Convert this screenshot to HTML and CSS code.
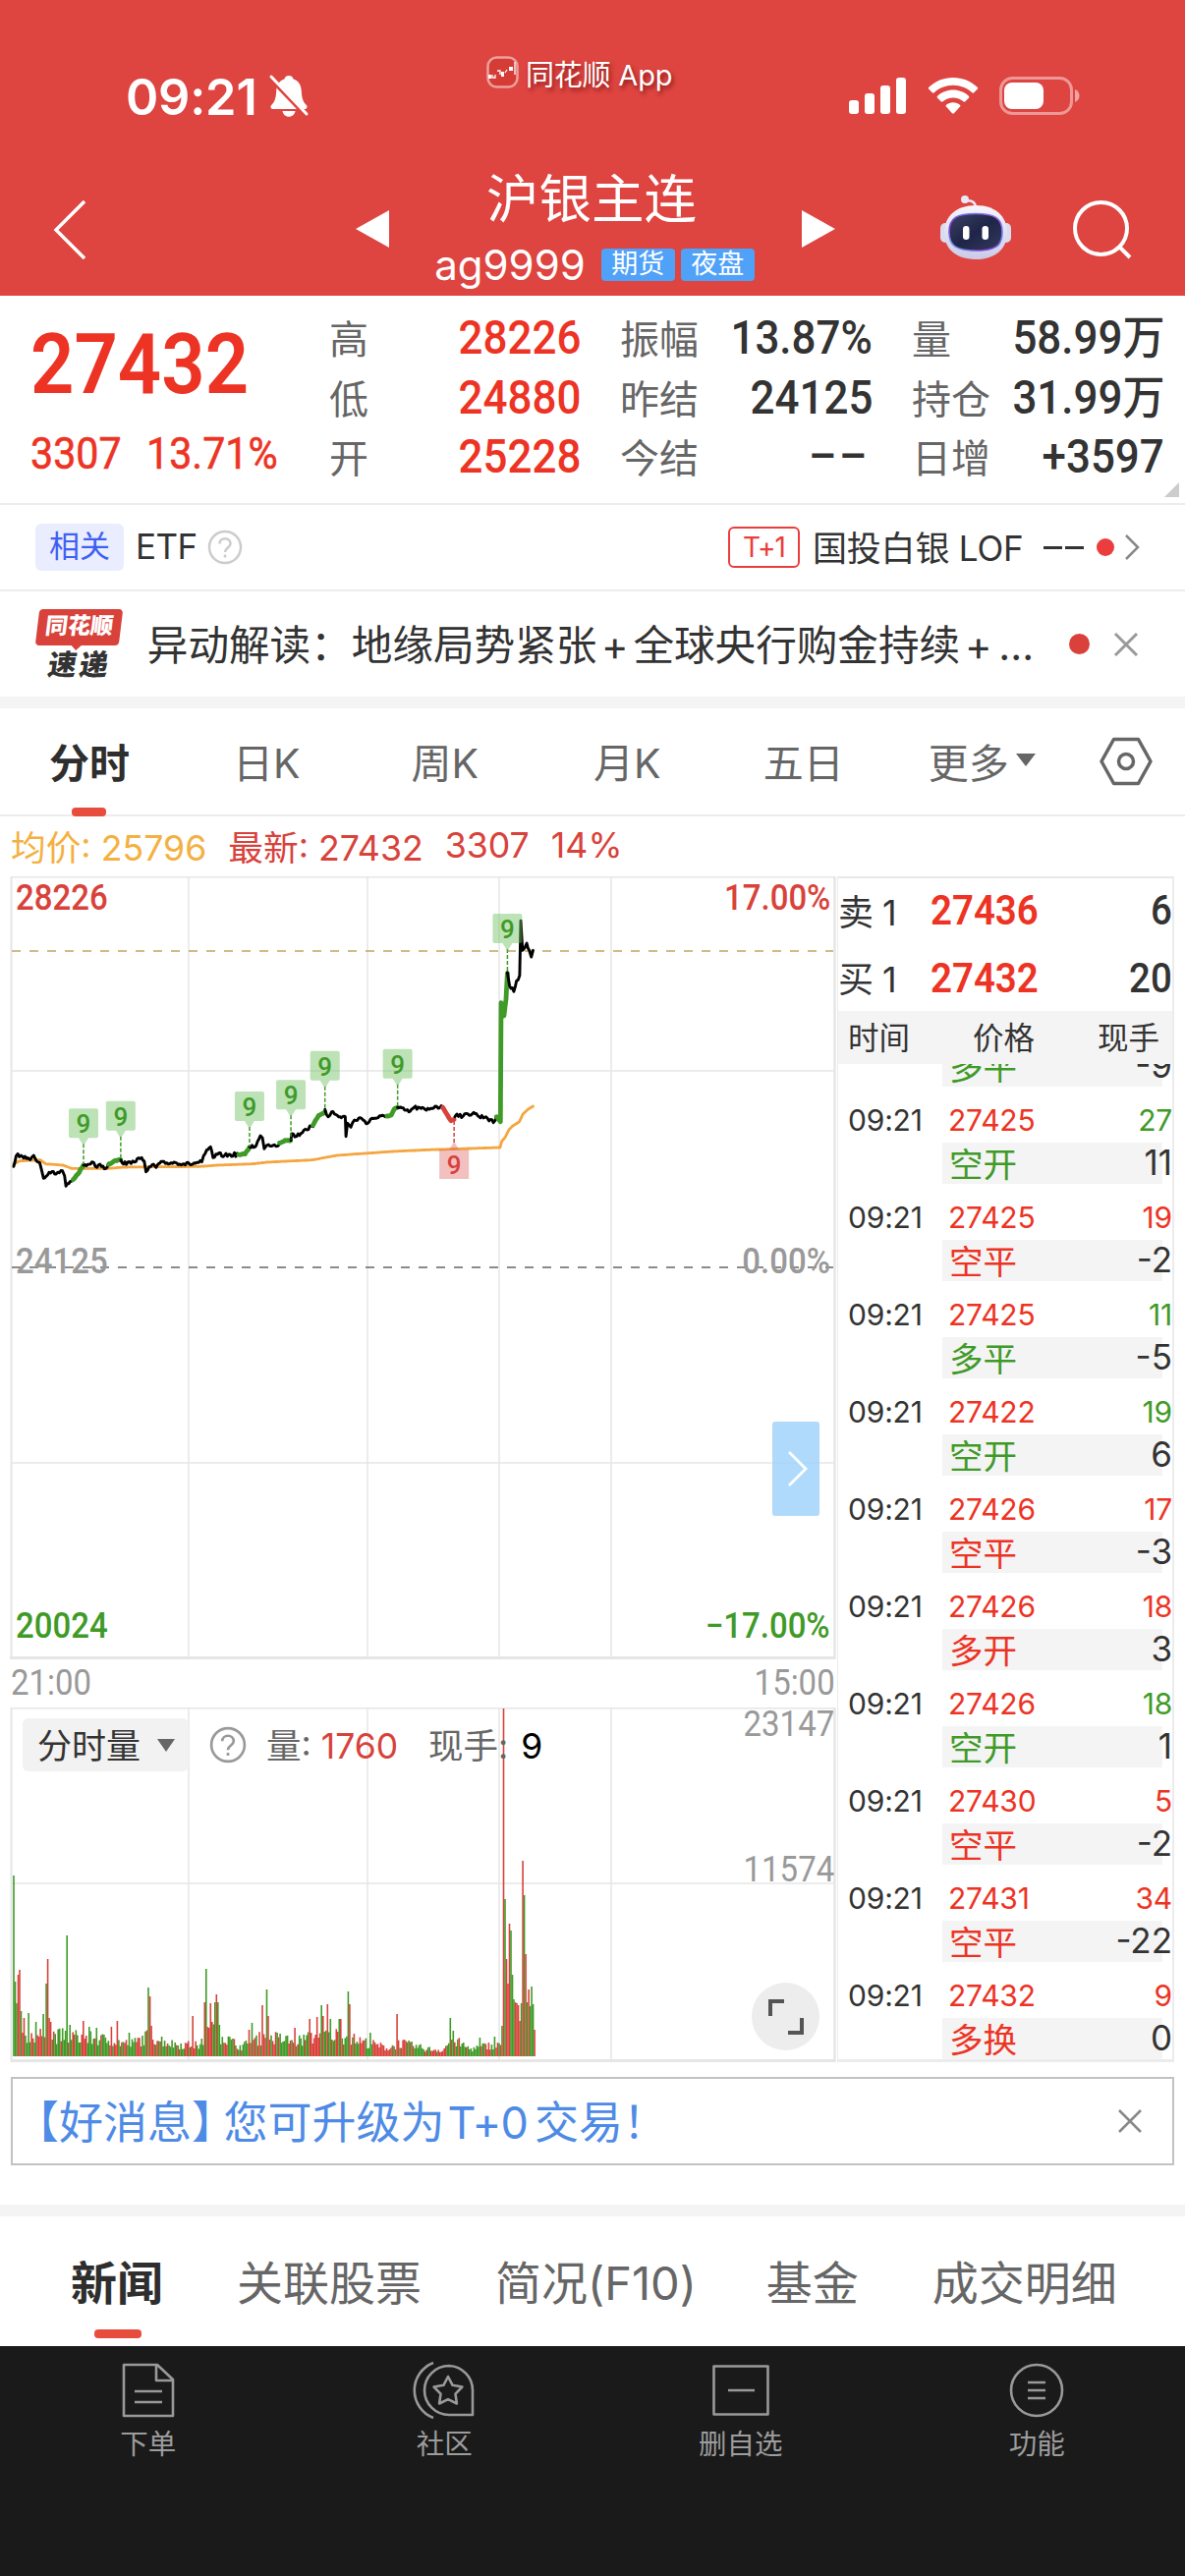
FILE: index.html
```html
<!DOCTYPE html>
<html lang="zh">
<head>
    <meta charset="UTF-8">
    <meta name="viewport" content="width=device-width, initial-scale=1.0">
    <title>沪银主连 ag9999</title>
    <link rel="stylesheet" href="styles.css">
</head>
<body>
    <!-- 顶部 -->
    <header class="header">
        <div class="status-bar">
            <div class="status-time">
                <span>09:21</span>
                <svg width="42" height="46" viewBox="0 0 42 46">
                    <path d="M21 2c2.600 0 4.200 1.600 4.600 3.600 5.400 1.700 7.900 6.200 8.200 12 .4 8 1.800 11.400 5 14.400 1.500 1.500.6 4-1.600 4H4.800c-2.200 0-3.100-2.500-1.600-4 3.200-3 4.600-6.400 5-14.400.3-5.800 2.800-10.300 8.200-12C16.800 3.600 18.400 2 21 2zM14.500 38h13c-.5 3.400-3 5.800-6.500 5.800s-6-2.400-6.500-5.800z" fill="#fff"/>
                    <path d="M-1 1l42 44" stroke="#de4440" stroke-width="5"/>
                    <path d="M3 3l36 38" stroke="#fff" stroke-width="3" stroke-linecap="round"/>
                </svg>
            </div>
            <div class="status-app">
                <svg width="34" height="34" viewBox="0 0 34 34">
                    <rect x="1.500" y="1.500" width="30" height="30" rx="9" fill="#d63c36" stroke="#eba09d" stroke-width="2.500"/>
                    <path d="M2 19h3v4H2zM15 16h3v5h-3zM23 11h4v4h-4z" fill="#fff"/>
                    <path d="M6 19v3h3v-3M11 15h3v4M19 17l2-3M29 6v13" fill="none" stroke="#fff" stroke-width="1.300"/>
                </svg>
                <span>同花顺 App</span>
            </div>
            <div class="status-icons">
                <svg width="60" height="38" viewBox="0 0 60 38" fill="#fff">
                    <rect x="0" y="23" width="10" height="14" rx="3"/>
                    <rect x="16" y="16" width="10" height="21" rx="3"/>
                    <rect x="32" y="8" width="10" height="29" rx="3"/>
                    <rect x="48" y="0" width="10" height="37" rx="3"/>
                </svg>
                <svg class="wifi" width="52" height="38" viewBox="0 0 52 38" fill="#fff">
                    <path d="M26 0c9.600 0 18.300 3.700 24.700 9.800.6.600.6 1.500 0 2l-3.500 3.500c-.5.500-1.400.5-2 0C40.200 10.600 33.400 7.800 26 7.800S11.800 10.600 6.800 15.300c-.6.500-1.500.5-2 0L1.300 11.800c-.6-.5-.6-1.400 0-2C7.700 3.700 16.400 0 26 0z"/>
                    <path d="M26 12.600c6.100 0 11.700 2.300 15.900 6.100.6.600.6 1.500 0 2.100l-3.500 3.400c-.6.600-1.400.6-2 .1-2.800-2.400-6.400-3.800-10.400-3.800s-7.600 1.400-10.400 3.800c-.6.500-1.400.5-2-.1l-3.500-3.400c-.6-.6-.6-1.500 0-2.100 4.200-3.800 9.800-6.100 15.900-6.100z"/>
                    <path d="M26 25.200c2.700 0 5.100.9 7 2.500.6.500.6 1.400.1 1.900l-6.100 6.600c-.5.600-1.500.6-2 0l-6.100-6.600c-.5-.5-.5-1.400.1-1.900 1.900-1.600 4.300-2.500 7-2.500z"/>
                </svg>
                <svg width="83" height="39" viewBox="0 0 83 39">
                    <rect x="1.500" y="1.500" width="72" height="36" rx="12" fill="none" stroke="#fff" stroke-opacity=".45" stroke-width="3"/>
                    <rect x="5" y="6" width="40" height="27" rx="8" fill="#fff"/>
                    <path d="M77 13c3.500 1.500 4.500 4 4.500 6.500S80.500 24.500 77 26z" fill="#fff" fill-opacity=".5"/>
                </svg>
            </div>
        </div>
        <div class="nav-bar">
            <svg class="back" width="34" height="62" viewBox="0 0 34 62"><path d="M32 2L3 31l29 29" fill="none" stroke="#fff" stroke-width="3.500"/></svg>
            <svg class="prev" width="34" height="38" viewBox="0 0 34 38"><path d="M34 0v38L0 19z" fill="#fff"/></svg>
            <div class="title">
                <h1>沪银主连</h1>
                <div class="code"><span>ag9999</span><i>期货</i><i>夜盘</i></div>
            </div>
            <svg class="next" width="34" height="38" viewBox="0 0 34 38"><path d="M0 0v38l34-19z" fill="#fff"/></svg>
            <svg class="robot" width="74" height="68" viewBox="0 0 74 68">
                <defs>
                    <linearGradient id="shell" x1="0" y1="0" x2="0" y2="1"><stop offset="0" stop-color="#f7f6fd"/><stop offset="1" stop-color="#c9cbe6"/></linearGradient>
                    <linearGradient id="face" x1="0" y1="0" x2="1" y2="1"><stop offset="0" stop-color="#3d4263"/><stop offset=".5" stop-color="#1f2548"/><stop offset="1" stop-color="#343a5c"/></linearGradient>
                    <linearGradient id="rim" x1="0" y1="1" x2="1" y2="0"><stop offset="0" stop-color="#5fc3e8"/><stop offset=".3" stop-color="#8a3be0"/><stop offset=".7" stop-color="#6f7cf0"/><stop offset="1" stop-color="#b35cf0"/></linearGradient>
                </defs>
                <path d="M27 6.500c5-1 10 1 10 7" fill="none" stroke="#e9e9f6" stroke-width="2.500"/>
                <circle cx="26" cy="5" r="4" fill="#e9e9f6"/>
                <rect x="1" y="29" width="10" height="20" rx="5" fill="#d9dbef"/>
                <rect x="63" y="29" width="10" height="20" rx="5" fill="#d9dbef"/>
                <path d="M37 11c20 0 32 11 32 28S56 66 37 66 5 56 5 39s12-28 32-28z" fill="url(#shell)"/>
                <path d="M37 19.500c19 0 27 4 27 18.500S57 57 37 57 10 52.500 10 38s8-18.500 27-18.500z" fill="url(#face)" stroke="url(#rim)" stroke-width="1.600"/>
                <rect x="24" y="32" width="6.500" height="14" rx="3.200" fill="#fff"/>
                <rect x="43.500" y="32" width="6.500" height="14" rx="3.200" fill="#fff"/>
            </svg>
            <svg class="search" width="62" height="62" viewBox="0 0 62 62"><circle cx="29.500" cy="29.500" r="26.500" fill="none" stroke="#fff" stroke-width="4"/><path d="M48 48l11 11" stroke="#fff" stroke-width="4"/></svg>
        </div>
    </header>

    <!-- 行情数据 -->
    <section class="quote">
        <div class="quote-main">
            <div class="price"><b class="din left">27432</b></div>
            <div class="change"><b class="din left">3307</b><b class="din left">13.71%</b></div>
        </div>
        <div class="quote-grid">
            <div><label>高</label><b class="din red">28226</b></div>
            <div><label>振幅</label><b class="din">13.87%</b></div>
            <div><label>量</label><b class="din">58.99<em>万</em></b></div>
            <div><label>低</label><b class="din red">24880</b></div>
            <div><label>昨结</label><b class="din">24125</b></div>
            <div><label>持仓</label><b class="din">31.99<em>万</em></b></div>
            <div><label>开</label><b class="din red">25228</b></div>
            <div><label>今结</label><b class="din dash">––</b></div>
            <div><label>日增</label><b class="din">+3597</b></div>
        </div>
        <svg class="corner" width="15" height="15" viewBox="0 0 15 15"><path d="M15 0v15H0z" fill="#ccc"/></svg>
    </section>

    <section class="related">
        <span class="tag-blue">相关</span>
        <span class="etf">ETF</span>
        <svg class="help" width="36" height="36" viewBox="0 0 36 36"><circle cx="18" cy="18" r="16" fill="none" stroke="#ccc" stroke-width="2.500"/><path d="M12.500 14.500c0-7 11-7 11 0 0 4-5.500 4-5.500 8.500M18 25.500v3" fill="none" stroke="#ccc" stroke-width="2.500"/></svg>
        <div class="related-right">
            <span class="tag-red">T+1</span>
            <span class="fund">国投白银 LOF</span>
            <span class="fund-value"></span>
            <i class="dot small"></i>
            <svg width="17" height="28" viewBox="0 0 17 28"><path d="M2 2l12 12L2 26" fill="none" stroke="#888" stroke-width="2.500"/></svg>
        </div>
    </section>

    <section class="news-line">
        <div class="news-logo"><span>同花顺</span><b>速递</b></div>
        <p>异动解读：地缘局势紧张<s>+</s>全球央行购金持续<s>+</s><u>…</u></p>
        <i class="dot"></i>
        <svg width="26" height="26" viewBox="0 0 26 26"><path d="M2 2l22 22M24 2L2 24" stroke="#999" stroke-width="3"/></svg>
    </section>

    <div class="band"></div>

    <!-- 周期切换 -->
    <nav class="period">
        <a class="active">分时</a>
        <a>日K</a>
        <a>周K</a>
        <a>月K</a>
        <a>五日</a>
        <a>更多<i class="caret"></i></a>
        <svg width="54" height="50" viewBox="0 0 54 50"><path d="M14.500 2.500h25L52 25 39.500 47.500h-25L2 25z" fill="none" stroke="#666" stroke-width="3.500" stroke-linejoin="round"/><circle cx="27" cy="25" r="7.500" fill="none" stroke="#666" stroke-width="3.500"/></svg>
    </nav>

    <div class="summary">
        <span class="avg">均价: 25796</span>
        <span>最新: 27432</span>
        <span>3307</span>
        <span>14%</span>
    </div>

    <main class="board">
        <div class="charts">
            <div class="chart">
                <svg id="priceChart" width="852" height="797" viewBox="0 0 852 797"></svg>
                <b class="din left lt red2">28226</b>
                <b class="din rt red2">17.00%</b>
                <b class="din left lm">24125</b>
                <b class="din rm">0.00%</b>
                <b class="din left lb green">20024</b>
                <b class="din rb green">−17.00%</b>
                <div class="expand-side"><svg width="22" height="38" viewBox="0 0 22 38"><path d="M2 2l17 17L2 36" fill="none" stroke="#fff" stroke-width="2.800"/></svg></div>
            </div>
            <div class="time-axis"><b class="din left">21:00</b><b class="din">15:00</b></div>
            <div class="chart volume">
                <svg id="volumeChart" width="852" height="361" viewBox="0 0 852 361"></svg>
                <div class="volume-bar">
                    <span class="select">分时量<i class="caret"></i></span>
                    <svg width="38" height="38" viewBox="0 0 36 36"><circle cx="18" cy="18" r="16" fill="none" stroke="#999" stroke-width="2.500"/><path d="M12.500 14.500c0-7 11-7 11 0 0 4-5.500 4-5.500 8.500M18 25.500v3" fill="none" stroke="#999" stroke-width="2.500"/></svg>
                    <span class="vol">量: <em>1760</em></span>
                    <span class="hand">现手: <em>9</em></span>
                </div>
                <b class="din vt">23147</b>
                <b class="din vm">11574</b>
                <div class="fullscreen"><svg width="38" height="38" viewBox="0 0 38 38"><path d="M3 18V3h14M35 20v15H21" fill="none" stroke="#555" stroke-width="4"/></svg></div>
            </div>
        </div>

        <aside class="orders">
            <div class="level"><span>卖 1</span><b class="din left">27436</b><b class="din count">6</b></div>
            <div class="level"><span>买 1</span><b class="din left">27432</b><b class="din count">20</b></div>
            <div class="orders-head"><span>时间</span><span>价格</span><span>现手</span></div>
            <div class="ticks" id="ticks"></div>
        </aside>
    </main>

    <div class="notice">
        <p>【好消息<s>】</s>您可升级为<u>T+0</u>交易！</p>
        <svg width="26" height="26" viewBox="0 0 26 26"><path d="M2 2l22 22M24 2L2 24" stroke="#888" stroke-width="2.500"/></svg>
    </div>

    <div class="band"></div>

    <nav class="info-tabs">
        <a class="active">新闻</a>
        <a>关联股票</a>
        <a>简况(F10)</a>
        <a>基金</a>
        <a>成交明细</a>
    </nav>

    <!-- 底部工具栏 -->
    <footer class="toolbar">
        <div>
            <svg width="60" height="60" viewBox="0 0 60 60"><path d="M5 4h34l16 15v37H5zM38 4v16h16M16 31h28M16 42h28"/></svg>
            <span>下单</span>
        </div>
        <div>
            <svg width="64" height="60" viewBox="0 0 64 60"><path d="M21 2a30 30 0 0 0 0 56M37 5a25 25 0 1 0 0 50h24V30A25 25 0 0 0 37 5z"/><path d="M36 16l4.600 8.800 9.800 1.700-6.900 7.100 1.400 9.900-8.900-4.400-8.900 4.400 1.400-9.900-6.900-7.100 9.800-1.700z"/></svg>
            <span>社区</span>
        </div>
        <div>
            <svg width="60" height="60" viewBox="0 0 60 60"><path d="M2.500 5.500h55v49h-55zM17 30h27"/></svg>
            <span>删自选</span>
        </div>
        <div>
            <svg width="60" height="60" viewBox="0 0 60 60"><circle cx="30" cy="30" r="26"/><path d="M21 22h18M21 30h18M21 38h18"/></svg>
            <span>功能</span>
        </div>
    </footer>

    <script src="script.js"></script>
</body>
</html>
```
FILE: styles.css
```css
* {
    margin: 0;
    padding: 0;
    box-sizing: border-box;
}

body {
    width: 1206px;
    height: 2622px;
    overflow: hidden;
    background: #fff;
    color: #333;
    font-family: Inter, "Noto Sans CJK SC", sans-serif;
}

svg {
    display: block;
    flex: none;
}

i, em {
    font-style: normal;
}

s, u {
    text-decoration: none;
}

/* 窄体数字 */
.din {
    display: inline-block;
    font-family: Roboto, "Noto Sans CJK SC", sans-serif;
    font-weight: 500;
    transform: scaleX(0.915);
    transform-origin: right center;
    white-space: nowrap;
}

.din.left {
    transform-origin: left center;
}

.red {
    color: #ed3324;
}

.green {
    color: #3f9a27;
}

/* 顶部 */
.header {
    height: 301px;
    background: #de4440;
    color: #fff;
}

.status-bar {
    display: flex;
    justify-content: space-between;
    height: 160px;
    padding: 0 106px 0 128px;
}

.status-time {
    display: flex;
    align-items: center;
    height: 196px;
    width: 300px;
    font-size: 50.500px;
    font-weight: 600;
    letter-spacing: -0.2px;
}

.status-time svg {
    margin-left: 11px;
}

.status-app {
    display: flex;
    align-items: center;
    gap: 6px;
    width: 200px;
    height: 148px;
    margin-left: -38px;
    font-size: 29px;
    letter-spacing: -0.2px;
    white-space: nowrap;
    text-shadow: 2px 3px 4px rgba(80, 0, 0, 0.6);
}

.status-icons {
    display: flex;
    align-items: center;
    justify-content: flex-end;
    width: 300px;
    height: 195px;
}

.wifi {
    margin: 0 21px 0 20px;
}

.nav-bar {
    display: flex;
    align-items: center;
    height: 141px;
    padding-left: 54px;
}

.back {
    margin-top: 7px;
}

.prev {
    margin: 4px 0 0 274px;
}

.title {
    display: flex;
    flex-direction: column;
    align-items: center;
    width: 420px;
}

.title h1 {
    margin: 8px 0 0 -8px;
    font-size: 53.500px;
    font-weight: 400;
    line-height: 74px;
}

.code {
    display: flex;
    align-items: center;
    height: 59px;
    margin: 0 0 4px 4px;
    font-size: 42px;
}

.code span {
    margin-right: 16px;
}

.code i {
    width: 75px;
    height: 33px;
    margin-right: 6px;
    border-radius: 4px;
    background: #4fa2f8;
    font-size: 27px;
    line-height: 31px;
    text-align: center;
}

.next {
    margin-top: 4px;
}

.robot {
    margin: 3px 0 0 106px;
}

.search {
    margin: 6px 0 0 61px;
}

/* 行情 */
.quote {
    position: relative;
    display: flex;
    height: 213px;
    border-bottom: 2px solid #ececec;
}

.quote-main {
    width: 335px;
    padding: 12px 0 0 31px;
    color: #ed3324;
}

.price {
    height: 116px;
    font-size: 85px;
    line-height: 114px;
}

.price b {
    font-weight: 600;
}

.change {
    height: 62px;
    font-size: 45px;
    line-height: 63px;
}

.change b {
    font-weight: 400;
    -webkit-text-stroke: 0.6px #ed3324;
}

.change b:last-child {
    margin-left: 17px;
}

.quote-grid {
    display: grid;
    grid-template-columns: 256px 257px 257px;
    grid-auto-rows: 60.500px;
    column-gap: 40px;
    padding-top: 12px;
}

.quote-grid div {
    display: flex;
    justify-content: space-between;
    align-items: center;
    white-space: nowrap;
}

.quote-grid label {
    width: 84px;
    font-size: 40px;
    color: #666;
}

.quote-grid b {
    padding-top: 2px;
    font-size: 48px;
    line-height: 60px;
}

.quote-grid em {
    font-size: 47px;
    line-height: 1;
}

.quote-grid .dash {
    padding-right: 3px;
    letter-spacing: 3px;
}

.corner {
    position: absolute;
    right: 6px;
    bottom: 6px;
}

.related {
    display: flex;
    align-items: center;
    height: 88px;
    padding: 0 45px 0 36px;
    border-bottom: 2px solid #ececec;
    font-size: 35px;
}

.tag-blue {
    width: 90px;
    height: 48px;
    border-radius: 6px;
    background: #e9edfe;
    color: #3f5ff2;
    font-size: 31px;
    line-height: 45px;
    text-align: center;
}

.etf {
    margin: 0 10px 2px 12px;
    letter-spacing: -0.6px;
}

.related-right {
    display: flex;
    align-items: center;
    margin-left: auto;
}

.tag-red {
    width: 73px;
    height: 42px;
    border: 2px solid #eb3d3d;
    border-radius: 6px;
    color: #eb3d3d;
    font-size: 28px;
    line-height: 38px;
    text-align: center;
    letter-spacing: -1px;
}

.fund {
    width: 216px;
    margin: 0 0 3px 13px;
    letter-spacing: -0.2px;
    white-space: nowrap;
}

.fund-value {
    width: 41px;
    height: 3px;
    margin: 0 13px 0 19px;
    background: linear-gradient(90deg, #333 19px, #fff 19px, #fff 22px, #333 22px);
}

.dot {
    width: 21px;
    height: 21px;
    border-radius: 50%;
    background: #da413a;
}

.dot.small {
    width: 18px;
    height: 18px;
    margin-right: 10px;
    background: #eb3d3d;
}

.news-line {
    display: flex;
    align-items: center;
    height: 107px;
    padding: 0 47px 0 37px;
}

.news-logo {
    display: flex;
    flex-direction: column;
    align-items: center;
    width: 88px;
    margin-right: 25px;
}

.news-logo span {
    position: relative;
    width: 85px;
    height: 37px;
    border-radius: 4px;
    background: #d9423b;
    color: #fff;
    font-size: 23px;
    font-weight: 900;
    line-height: 35px;
    text-align: center;
    transform: skewX(-7deg);
}

.news-logo span::after {
    content: '';
    position: absolute;
    left: 36px;
    top: 36px;
    border: 6px solid transparent;
    border-top-color: #d9423b;
}

.news-logo b {
    margin-top: 5px;
    font-size: 29px;
    font-weight: 900;
    line-height: 30px;
    letter-spacing: 3px;
    transform: skewX(-9deg);
}

.news-line p {
    width: 940px;
    padding-bottom: 4px;
    font-size: 41.600px;
    white-space: nowrap;
}

.news-line p s {
    display: inline-block;
    width: 37px;
    text-align: center;
}

.news-line p u {
    letter-spacing: 1px;
    margin-left: 2px;
}

.news-line > svg {
    margin-left: 24px;
}

.band {
    height: 12px;
    background: #f4f4f4;
}

/* 周期 */
.period {
    display: flex;
    align-items: center;
    height: 110px;
    padding: 0 33px 0 50px;
    border-bottom: 2px solid #ececec;
    font-size: 41px;
    color: #666;
}

.period a {
    position: relative;
    margin: 0 105px 3px 0;
    white-space: nowrap;
}

.period a:nth-of-type(2) {
    margin-right: 113px;
}

.period a:nth-of-type(3) {
    margin-right: 117px;
}

.period a:nth-of-type(4) {
    margin-right: 104px;
}

.period a:nth-of-type(5) {
    margin-right: 86px;
}

.period a:nth-of-type(6) {
    display: flex;
    align-items: center;
    margin-right: 0;
}

.period svg {
    margin-left: auto;
}

.period .active, .info-tabs .active {
    color: #2e2e2e;
    font-weight: 700;
}

.period .active::after {
    content: '';
    position: absolute;
    left: 23px;
    bottom: -27px;
    width: 35px;
    height: 9px;
    border-radius: 4px;
    background: #e84c3d;
}

.caret {
    display: inline-block;
    border: 10px solid transparent;
    border-top: 13px solid #666;
    border-bottom: 0;
    margin-left: 7px;
}

.summary {
    display: flex;
    align-items: center;
    height: 61px;
    padding: 0 0 3px 11px;
    font-size: 35.700px;
    color: #d8423b;
    gap: 22px;
    white-space: nowrap;
}

.summary .avg {
    color: #f4b041;
}

/* 图表 */
.board {
    display: flex;
    height: 1207px;
}

.charts {
    width: 852px;
}

.chart {
    position: relative;
    height: 797px;
    font-size: 36px;
}

.chart > b {
    position: absolute;
    line-height: 36px;
    color: #999;
}

.chart > .red2 {
    color: #d8423b;
}

.chart > .green {
    color: #3f9a27;
}

.lt, .lm, .lb {
    left: 16px;
}

.rt, .rm, .rb {
    right: 7px;
}

.lt, .rt {
    top: 4px;
}

.lm, .rm {
    top: 374px;
}

.lb, .rb {
    top: 745px;
}

.expand-side {
    position: absolute;
    left: 786px;
    top: 555px;
    display: flex;
    align-items: center;
    justify-content: center;
    width: 48px;
    height: 96px;
    border-radius: 3px;
    background: rgba(161, 211, 250, 0.85);
    padding-left: 4px;
}

.time-axis {
    display: flex;
    align-items: center;
    justify-content: space-between;
    height: 49px;
    padding: 0 2px 1px 11px;
    font-size: 36px;
    color: #999;
}

.time-axis b {
    font-weight: 400;
}

.volume {
    height: 361px;
}

.chart .vt {
    top: -1px;
    right: 3px;
    font-weight: 400;
}

.chart .vm {
    top: 147px;
    right: 3px;
    font-weight: 400;
}

.volume-bar {
    position: absolute;
    left: 23px;
    top: 11px;
    display: flex;
    align-items: center;
    height: 54px;
    font-size: 35.500px;
    color: #666;
    white-space: nowrap;
}

.vol, .hand {
    padding-bottom: 4px;
}

.select {
    display: flex;
    align-items: center;
    width: 169px;
    height: 54px;
    padding: 0 0 3px 15px;
    border-radius: 6px;
    background: #f2f2f2;
    color: #333;
    font-size: 35px;
}

.select .caret {
    margin: 3px 0 0 17px;
    border-width: 13px 9px 0;
}

.volume-bar svg {
    margin: 0 20px 0 21px;
}

.vol em {
    color: #d8423b;
}

.hand {
    margin-left: 31px;
}

.hand em {
    color: #000;
    margin-left: 3px;
}

.fullscreen {
    position: absolute;
    left: 765px;
    top: 280px;
    display: flex;
    align-items: center;
    justify-content: center;
    width: 69px;
    height: 69px;
    border-radius: 50%;
    background: #ededed;
}

.marker text {
    font-family: Roboto, sans-serif;
    font-size: 26px;
    font-weight: 500;
    text-anchor: middle;
}

/* 盘口与明细 */
.orders {
    width: 343px;
    border: 2px solid #ececec;
    border-left-width: 1px;
    border-bottom-width: 3px;
    border-top-color: #e8e8e8;
}

.level {
    display: flex;
    align-items: center;
    height: 68px;
    padding-bottom: 3px;
    font-size: 36px;
}

.level:nth-child(2) {
    height: 67px;
    padding-bottom: 1px;
}

.level span {
    width: 94px;
    padding-bottom: 2px;
    letter-spacing: -0.6px;
}

.level b {
    font-size: 42px;
    color: #ed3324;
    font-weight: 600;
}

.level .count {
    margin-left: auto;
    color: #333;
    font-weight: 500;
}

.orders-head {
    display: flex;
    align-items: center;
    height: 54px;
    background: #f4f4f4;
    font-size: 31.500px;
    padding: 0 0 4px 10px;
}

.orders-head span {
    width: 64px;
    margin-right: 63px;
    white-space: nowrap;
}

.orders-head span:last-child {
    margin-right: 0;
}

.ticks {
    display: flex;
    flex-direction: column;
    justify-content: flex-end;
    height: 1013px;
    overflow: hidden;
}

.tick {
    flex: none;
}

.tick-top {
    display: grid;
    grid-template-columns: 102px 1fr auto;
    align-items: center;
    height: 57px;
    padding: 10px 0 0 10px;
    font-size: 30px;
    letter-spacing: -0.2px;
}

.tick-bottom {
    display: flex;
    align-items: center;
    justify-content: space-between;
    height: 42px;
    width: 224px;
    margin-left: 106px;
    padding: 0 0 2px 7px;
    background: #f4f4f4;
    font-size: 34.500px;
}

.tick-bottom span:last-child {
    color: #333;
    margin-right: -10px;
    font-size: 35px;
}

/* 提示条 */
.notice {
    display: flex;
    align-items: center;
    justify-content: space-between;
    height: 90px;
    margin: 15px 11px 40px;
    padding: 0 30px 0 2px;
    border: 2px solid #c2c2c2;
    color: #4e8be6;
    font-size: 45px;
}

.notice p {
    padding-bottom: 4px;
    white-space: nowrap;
}

.notice s {
    font-feature-settings: "halt";
    margin-right: 10px;
}

.notice u {
    margin: 0 7px 0 3px;
    letter-spacing: -0.8px;
}

.info-tabs {
    display: flex;
    align-items: center;
    height: 132px;
    padding: 0 0 4px 72px;
    font-size: 47px;
    color: #666;
    white-space: nowrap;
}

.info-tabs a {
    position: relative;
    margin-right: 75px;
}

.info-tabs a:nth-child(3) {
    margin-right: 71px;
}

.info-tabs .active::after {
    content: '';
    position: absolute;
    left: 24px;
    bottom: -25px;
    width: 48px;
    height: 9px;
    border-radius: 4px;
    background: #e84c3d;
}

/* 底部 */
.toolbar {
    display: grid;
    grid-template-columns: repeat(4, 1fr);
    height: 234px;
    background: #1a1a1a;
    color: #9c9c9c;
    font-size: 28.500px;
}

.toolbar div {
    display: flex;
    flex-direction: column;
    align-items: center;
    padding-top: 15px;
}

.toolbar svg {
    fill: none;
    stroke: #999;
    stroke-width: 2.600;
    stroke-linejoin: round;
}

.toolbar span {
    margin-top: 4px;
    line-height: 42px;
}
```
FILE: script.js
```js
// 伪随机，保证每次绘制一致
let seed = 7;
function rand() {
    seed = (seed * 16807) % 2147483647;
    return seed / 2147483647;
}

const GRID_X = [192, 374, 508, 622];
const RED = '#d8423b';
const GREEN = '#3f9a27';

function line(x1, y1, x2, y2, color, width, dash) {
    return `<line x1="${x1}" y1="${y1}" x2="${x2}" y2="${y2}" stroke="${color}" stroke-width="${width}"` +
        (dash ? ` stroke-dasharray="${dash}"` : '') + '/>';
}

function px(p) {
    return [p[0] / 2.8, p[1] / 3 - 12];
}

// 在关键点之间补上小幅波动
function walk(points, noise) {
    const out = [];
    for (let i = 0; i < points.length - 1; i++) {
        const [x1, y1] = px(points[i]);
        const [x2, y2] = px(points[i + 1]);
        const n = Math.max(1, Math.round((x2 - x1) / 1.5));
        for (let k = 0; k < n; k++) {
            const j = k ? (rand() - 0.5) * noise : 0;
            out.push([x1 + (x2 - x1) * k / n, y1 + (y2 - y1) * k / n + j]);
        }
    }
    out.push(px(points[points.length - 1]));
    return out.map(p => p[0].toFixed(1) + ',' + p[1].toFixed(1)).join(' ');
}

function poly(points, color, width, noise) {
    return `<polyline points="${walk(points, noise)}" fill="none" stroke="${color}" stroke-width="${width}" stroke-linejoin="round" stroke-linecap="round"/>`;
}

const price = [
    ['k', [[39,922],[46,890],[60,888],[75,898],[90,895],[96,888],[104,905],[113,910],[119,935],[124,958],[140,940],[160,945],[178,935],[184,950],[188,982],[200,968],[208,962]]],
    ['g', [[208,962],[222,945],[238,918]]],
    ['k', [[238,918],[250,916],[262,908],[272,922],[285,915],[302,928],[310,912]]],
    ['g', [[310,916],[325,905],[344,902]]],
    ['k', [[344,902],[360,916],[378,905],[400,898],[411,906],[416,938],[430,922],[437,915],[445,925],[455,912],[500,910],[540,915],[575,908],[585,882],[600,862],[607,895],[620,885],[640,888],[680,885]]],
    ['g', [[680,886],[698,884],[711,864]]],
    ['k', [[711,862],[730,858],[742,828],[748,835],[753,868],[765,855],[795,856]]],
    ['g', [[797,850],[812,842],[828,843]]],
    ['k', [[829,842],[831,822],[845,830],[870,808],[892,800]]],
    ['g', [[892,796],[908,766],[926,756]]],
    ['k', [[926,748],[935,770],[945,755],[965,770],[984,770],[986,830],[990,790],[1000,802],[1010,780],[1030,775],[1048,790],[1060,775],[1103,768]]],
    ['g', [[1103,768],[1115,765],[1124,746],[1133,742]]],
    ['k', [[1133,742],[1165,755],[1180,742],[1200,745],[1215,750],[1240,738],[1262,742]]],
    ['r', [[1262,742],[1275,765],[1285,782],[1294,778]]],
    ['k', [[1296,770],[1302,762],[1320,768],[1350,757],[1365,770],[1385,770],[1406,788],[1415,770]]],
    ['g', [[1415,770],[1426,785],[1428,422],[1436,462],[1442,410],[1446,332]]],
    ['k', [[1446,330],[1452,370],[1464,388],[1472,355],[1481,338],[1484,172],[1489,262],[1495,255],[1501,240],[1508,262],[1514,282],[1519,262]]]
];

const average = [[39,915],[55,905],[115,902],[130,914],[180,918],[205,928],[310,928],[350,924],[570,922],[620,918],[720,914],[760,909],[890,902],[960,888],[1040,882],[1120,876],[1220,871],[1425,864],[1430,845],[1440,832],[1450,810],[1462,797],[1480,785],[1490,762],[1505,747],[1519,738]];

// 九转标记：x，方框顶部，连接线终点
const marks = [[238,745,915],[344,722,900],[711,693,862],[829,658,840],[926,569,750],[1133,563,740],[1446,150,330]];

function drawPrice() {
    let s = '';
    GRID_X.forEach(x => s += line(x, 0, x, 796, '#e6e6e6', 1.5));
    s += line(11, 198, 850, 198, '#e6e6e6', 1.5) + line(11, 597, 850, 597, '#e6e6e6', 1.5);
    s += line(11, 0.5, 850, 0.5, '#e6e6e6', 2) + line(11.5, 0, 11.5, 796, '#e6e6e6', 2) + line(849.5, 0, 849.5, 797, '#e6e6e6', 2.5);
    s += line(10, 795.5, 850, 795.5, '#e6e6e6', 3);
    s += line(12, 398, 848, 398, '#666', 1.5, '9 9');
    s += line(12, 76, 848, 76, '#c9a262', 1.5, '9 9');
    s += poly(average, '#f4a640', 2.8, 0);
    price.forEach(([type, pts]) => {
        const color = { k: '#000', g: GREEN, r: RED }[type];
        s += poly(pts, color, type === 'k' ? 2.9 : 4.8, type === 'k' ? 4 : 1);
    });
    marks.forEach(([mx, top, end]) => {
        const [x, y] = px([mx, top]);
        s += line(x, y + 36, x, end / 3 - 12, GREEN, 1.5, '4 2');
        s += `<g class="marker" fill="${GREEN}"><path fill="#6dbf60" fill-opacity=".46" d="M${x - 13} ${y}h26a2 2 0 0 1 2 2v26a2 2 0 0 1-2 2h-8l-5 8-5-8h-8a2 2 0 0 1-2-2v-26a2 2 0 0 1 2-2z"/><text x="${x}" y="${y + 25}">9</text></g>`;
    });
    const [rx, ry] = px([1294, 870]);
    s += line(rx, 249, rx, ry - 6, RED, 1.5, '4 2');
    s += `<g class="marker" fill="${RED}"><path fill="#da5a58" fill-opacity=".38" d="M${rx - 15} ${ry}h10l5-8 5 8h10v30h-30z"/><text x="${rx}" y="${ry + 25}">9</text></g>`;
    document.getElementById('priceChart').innerHTML = s;
}

// 成交量峰值：[横坐标, 高度, 颜色]
const peaks = [[26,184,'g'],[28,76,'g'],[31,54,'g'],[34,83,'r'],[37,88,'r'],[39,46,'g'],[45,39,'r'],[53,44,'g'],[67,35,'g'],[79,43,'g'],[84,74,'g'],[87,99,'r'],[90,39,'r'],[94,35,'r'],[125,123,'g'],[128,57,'r'],[130,32,'g'],[155,36,'r'],[164,30,'g'],[178,29,'g'],[205,30,'r'],[218,36,'r'],[238,24,'g'],[274,70,'g'],[277,61,'r'],[280,31,'r'],[356,41,'r'],[380,55,'r'],[383,89,'g'],[389,54,'r'],[392,35,'r'],[397,55,'g'],[400,63,'r'],[403,55,'g'],[406,32,'g'],[460,27,'r'],[468,34,'g'],[486,52,'r'],[493,68,'g'],[496,41,'r'],[545,29,'r'],[573,38,'r'],[588,40,'r'],[595,52,'g'],[598,41,'r'],[606,53,'r'],[612,38,'g'],[628,38,'g'],[631,38,'r'],[645,66,'g'],[648,53,'r'],[686,24,'g'],[735,43,'r'],[834,39,'g'],[840,26,'g'],[889,19,'g'],[917,20,'g'],[930,31,'g'],[933,354,'r'],[936,160,'g'],[939,99,'r'],[941,74,'r'],[944,135,'r'],[947,128,'g'],[950,83,'g'],[952,58,'g'],[955,55,'r'],[958,54,'r'],[961,52,'r'],[964,36,'r'],[966,54,'g'],[969,199,'r'],[972,164,'g'],[974,104,'r'],[977,55,'g'],[980,68,'r'],[983,51,'g'],[985,71,'g'],[988,53,'g'],[991,27,'r']];
const base = [[24,36],[50,32],[130,30],[200,24],[240,18],[275,30],[320,18],[370,16],[385,38],[410,30],[445,14],[490,30],[545,22],[610,34],[660,24],[720,12],[740,20],[790,11],[820,9],[836,26],[870,11],[925,19],[993,50]];

function envelope(x) {
    for (let i = 1; i < base.length; i++) {
        if (x <= base[i][0]) {
            const [x0, h0] = base[i - 1];
            const [x1, h1] = base[i];
            return h0 + (h1 - h0) * (x - x0) / (x1 - x0);
        }
    }
    return 20;
}

function drawVolume() {
    let s = '';
    GRID_X.forEach(x => s += line(x, 0, x, 360, '#e6e6e6', 1.5));
    s += line(11, 0.5, 850, 0.5, '#e6e6e6', 2) + line(11, 179, 850, 179, '#e6e6e6', 1.5);
    s += line(11.5, 0, 11.5, 361, '#e6e6e6', 2) + line(849.5, 0, 849.5, 361, '#e6e6e6', 2.5) + line(11, 359.5, 850, 359.5, '#e6e6e6', 3);
    const bars = [];
    let color = 'g';
    for (let i = 0; i < 353; i++) {
        if (rand() < 0.42) color = color === 'g' ? 'r' : 'g';
        bars.push([envelope(24 + i * 2.744) * (0.4 + rand() * 0.55), color]);
    }
    peaks.forEach(([x, h, c]) => {
        bars[Math.min(352, Math.round((x - 25) / 2.744))] = [h, c];
    });
    bars.forEach(([h, c], i) => {
        const x = 14 + i * 1.506;
        s += line(x.toFixed(1), 355, x.toFixed(1), (355 - h).toFixed(1), c === 'g' ? GREEN : RED, 1.6);
    });
    document.getElementById('volumeChart').innerHTML = s;
}

// 成交明细：价格，现手，现手颜色，开平，增仓，颜色
const ticks = [
    ['27425', '27', 'green', '空开', '11', 'green'],
    ['27425', '19', 'red', '空平', '-2', 'red'],
    ['27425', '11', 'green', '多平', '-5', 'green'],
    ['27422', '19', 'green', '空开', '6', 'green'],
    ['27426', '17', 'red', '空平', '-3', 'red'],
    ['27426', '18', 'red', '多开', '3', 'red'],
    ['27426', '18', 'green', '空开', '1', 'green'],
    ['27430', '5', 'red', '空平', '-2', 'red'],
    ['27431', '34', 'red', '空平', '-22', 'red'],
    ['27432', '9', 'red', '多换', '0', 'red']
];

function tickBottom(name, value, color) {
    return `<div class="tick-bottom ${color}"><span>${name}</span><span>${value}</span></div>`;
}

function drawTicks() {
    // 最上面一条已滚出一半，只剩下半行
    const first = `<div class="tick">${tickBottom('多平', '-9', 'green')}</div>`;
    document.getElementById('ticks').innerHTML = first + ticks.map(t => `
        <div class="tick">
            <div class="tick-top"><span>09:21</span><span class="red">${t[0]}</span><span class="${t[2]}">${t[1]}</span></div>
            ${tickBottom(t[3], t[4], t[5])}
        </div>`).join('');
}

drawPrice();
drawVolume();
drawTicks();
```
